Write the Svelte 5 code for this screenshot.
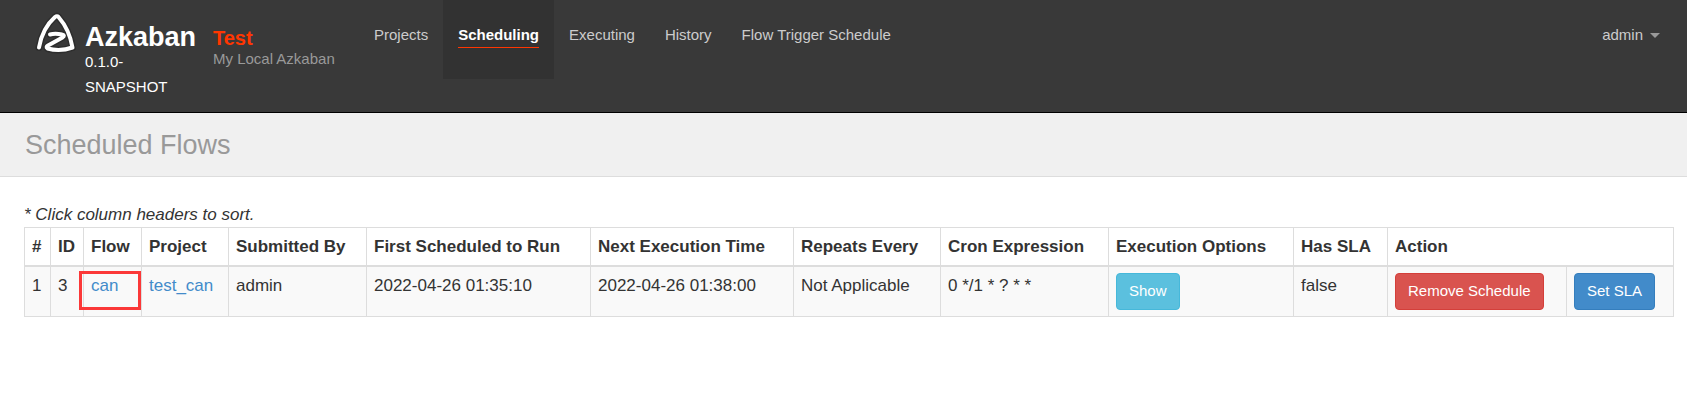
<script lang="ts">
  const navItems = [
    { label: "Projects", href: "#projects" },
    { label: "Scheduling", href: "#schedule" },
    { label: "Executing", href: "#executor" },
    { label: "History", href: "#history" },
    { label: "Flow Trigger Schedule", href: "#flowtriggerschedule" },
  ];
  let active = $state("Scheduling");

  // Action spans the last two columns
  const headers = [
    "#",
    "ID",
    "Flow",
    "Project",
    "Submitted By",
    "First Scheduled to Run",
    "Next Execution Time",
    "Repeats Every",
    "Cron Expression",
    "Execution Options",
    "Has SLA",
    "Action",
  ];

  const weights = [26, 33, 58, 87, 138, 224, 203, 147, 168, 185, 94, 179, 107];
  const total = weights.reduce((a, b) => a + b, 0);

  const schedules = [
    {
      id: 3,
      flow: "can",
      project: "test_can",
      user: "admin",
      first: "2022-04-26 01:35:10",
      next: "2022-04-26 01:38:00",
      period: "Not Applicable",
      cron: "0 */1 * ? * *",
      sla: false,
    },
  ];

  const mark =
    "M7 38.500C9 27 14.500 15.500 23 8Q25 6.500 26.500 8C33.500 16 38.500 27 40.500 38.500C32 41.500 23 41.500 15.500 39.500Q13.500 38 16 36.500L30.500 28.500Q33.500 26 30 25.500Q23 24 18 25.500";
</script>

<header class="navbar">
  <a class="brand" href="#home">
    <svg class="logo" viewBox="0 0 48 48" aria-hidden="true">
      <path class="halo" d={mark} />
      <path class="mark" d={mark} />
    </svg>
    <span class="brand-text">
      <strong>Azkaban</strong>
      <span class="version">0.1.0-SNAPSHOT</span>
    </span>
  </a>
  <div class="instance">
    <strong>Test</strong>
    <span>My Local Azkaban</span>
  </div>
  <nav class="nav">
    {#each navItems as item (item.label)}
      <a
        href={item.href}
        class:active={item.label === active}
        onclick={() => (active = item.label)}><span>{item.label}</span></a
      >
    {/each}
  </nav>
  <button type="button" class="user">admin <span class="caret"></span></button>
</header>

<div class="page-header">
  <h1>Scheduled Flows</h1>
</div>

<main>
  <p class="hint">* Click column headers to sort.</p>
  <table>
    <colgroup>
      {#each weights as w}
        <col style="width:{(w / total) * 100}%" />
      {/each}
    </colgroup>
    <thead>
      <tr>
        {#each headers as h (h)}
          <th colspan={h === "Action" ? 2 : 1}>{h}</th>
        {/each}
      </tr>
    </thead>
    <tbody>
      {#each schedules as s, i (s.id)}
        <tr>
          <td>{i + 1}</td>
          <td>{s.id}</td>
          <td class="marked"><a href="#flow">{s.flow}</a></td>
          <td><a href="#project">{s.project}</a></td>
          <td>{s.user}</td>
          <td>{s.first}</td>
          <td>{s.next}</td>
          <td>{s.period}</td>
          <td>{s.cron}</td>
          <td><button type="button" class="btn info">Show</button></td>
          <td>{s.sla}</td>
          <td><button type="button" class="btn danger">Remove Schedule</button></td>
          <td><button type="button" class="btn primary">Set SLA</button></td>
        </tr>
      {/each}
    </tbody>
  </table>
</main>

<style>
  :global(body) {
    margin: 0;
    background: #fff;
    color: #333;
    font-family: "Liberation Sans", Arial, sans-serif;
    font-size: 17px;
    line-height: 25px;
  }

  a {
    color: #428bca;
    text-decoration: none;
  }

  .navbar {
    display: flex;
    align-items: flex-start;
    min-height: 112px;
    padding: 0 12px 0 32px;
    background: #393939;
    border-bottom: 1px solid #000;
  }

  .brand {
    display: flex;
    gap: 5px;
    width: 181px;
    padding-top: 9px;
    color: #fff;
  }

  .logo {
    flex: none;
    width: 48px;
    height: 48px;
    fill: none;
    stroke-linecap: round;
    stroke-linejoin: round;
  }

  .halo {
    stroke: #222;
    stroke-width: 7;
    opacity: 0.5;
  }

  .mark {
    stroke: #fff;
    stroke-width: 4;
  }

  .brand-text {
    padding: 16px 12px 0 0;
  }

  .brand-text strong {
    display: block;
    font-size: 27px;
    line-height: 24px;
  }

  .version {
    display: block;
    font-size: 15px;
    line-height: 25px;
  }

  .instance {
    display: flex;
    flex-direction: column;
    width: 146px;
    padding-top: 28px;
    font-size: 15px;
    line-height: 21px;
    color: #999;
  }

  .instance strong {
    font-size: 20px;
    line-height: 20px;
    color: #ff3601;
  }

  .nav {
    display: flex;
    flex: 1;
  }

  .nav a {
    height: 54px;
    padding: 25px 15px 0;
    font-size: 15px;
    line-height: 20px;
    color: #ccc;
  }

  .nav span {
    display: block;
    padding-bottom: 2px;
  }

  .nav .active {
    background: #323232;
    color: #fff;
    font-weight: bold;
  }

  .nav .active span {
    border-bottom: 1px solid #ff3601;
  }

  .nav a:hover {
    color: #fff;
  }

  .user {
    display: flex;
    align-items: center;
    gap: 7px;
    padding: 25px 15px;
    border: 0;
    background: none;
    color: #ccc;
    font: inherit;
    font-size: 15px;
    line-height: 20px;
    cursor: pointer;
  }

  .caret {
    border: 5px solid transparent;
    border-top-color: #999;
    border-bottom: 0;
  }

  .page-header {
    padding: 15px 25px 14px;
    background: #f0f0f0;
    border-bottom: 1px solid #ddd;
  }

  h1 {
    margin: 0;
    font-size: 27px;
    font-weight: normal;
    line-height: 34px;
    color: #999;
  }

  main {
    padding: 25px 13px 25px 24px;
  }

  .hint {
    margin: 0;
    font-style: italic;
  }

  table {
    width: 100%;
    table-layout: fixed;
    border-collapse: collapse;
  }

  th,
  td {
    padding: 6px 7px;
    border: 1px solid #ddd;
    text-align: left;
    vertical-align: top;
    white-space: nowrap;
  }

  th {
    border-bottom-width: 2px;
    cursor: pointer;
  }

  tbody tr:nth-child(odd) {
    background: #f9f9f9;
  }

  .marked {
    position: relative;
  }

  .marked::after {
    content: "";
    position: absolute;
    inset: 4px 0 6px -5px;
    border: 3px solid #fb3838;
    pointer-events: none;
  }

  .btn {
    display: block;
    padding: 5px 12px 7px;
    border: 1px solid;
    border-radius: 4px;
    color: #fff;
    font: inherit;
    font-size: 15px;
    line-height: 23px;
    cursor: pointer;
  }

  .info {
    background: #5bc0de;
    border-color: #46b8da;
  }

  .danger {
    background: #d9534f;
    border-color: #d43f3a;
  }

  .primary {
    background: #428bca;
    border-color: #357ebd;
  }
</style>
